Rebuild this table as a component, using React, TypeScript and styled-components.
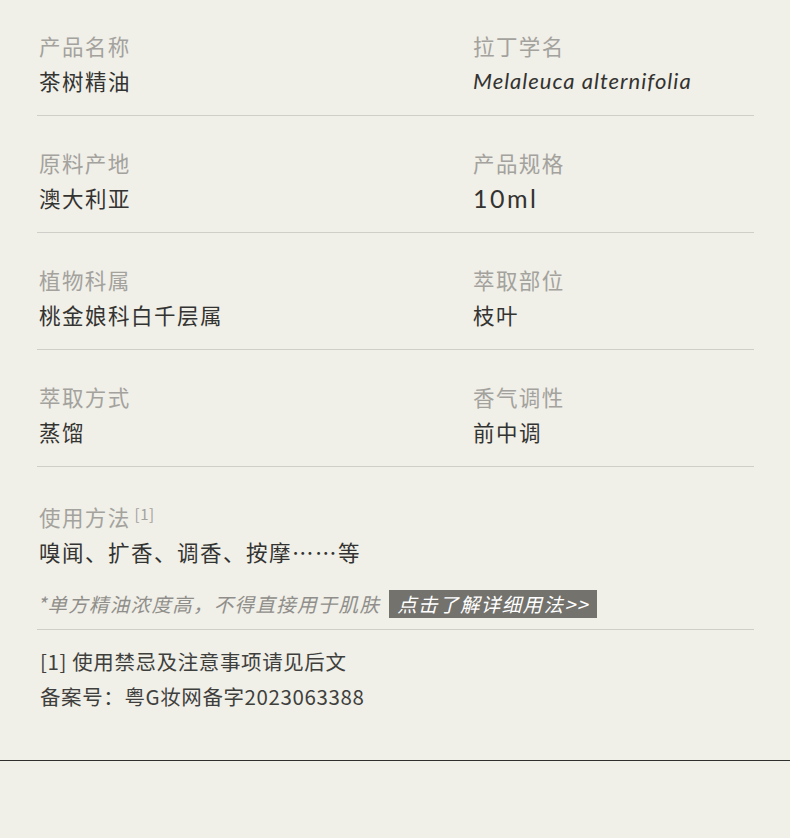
import React from 'react';
import styled, { createGlobalStyle } from 'styled-components';

const GlobalStyle = createGlobalStyle`
  html, body {
    margin: 0;
    padding: 0;
    background: #f0efe8;
  }
  body {
    font-family: "Noto Sans CJK SC", "Noto Sans", sans-serif;
  }
`;

const Page = styled.div`
  width: 790px;
  height: 838px;
  background: #f0efe8;
  display: flex;
  flex-direction: column;
`;

const Content = styled.div`
  padding: 25px 36px 0 37px;
  height: 760px;
  box-sizing: border-box;
`;

const Row = styled.div<{ first?: boolean }>`
  display: grid;
  grid-template-columns: 434px 1fr;
  padding: ${p => (p.first ? '6px' : '32px')} 0 19px 2px;
  border-bottom: 1px solid #cfcec8;
`;

const Field = styled.div`
  display: flex;
  flex-direction: column;
`;

const Label = styled.div`
  font-size: 21.5px;
  line-height: 30px;
  color: #a3a29d;
  letter-spacing: 1.4px;
  margin-bottom: 5px;
`;

const Value = styled.div<{ latin?: boolean; italic?: boolean; wide?: boolean }>`
  font-family: ${p => (p.latin ? 'Lato, "Noto Sans", sans-serif' : '"Noto Sans CJK SC", sans-serif')};
  font-style: ${p => (p.italic ? 'italic' : 'normal')};
  font-size: ${p => (p.wide ? '25px' : p.latin ? '22px' : '21.5px')};
  line-height: 30px;
  color: #333331;
  letter-spacing: ${p => (p.wide ? '2.5px' : p.latin ? '1px' : '1.5px')};
`;

const Usage = styled.div`
  padding: 32px 0 11px 2px;
  border-bottom: 1px solid #cfcec8;
`;

const Sup = styled.sup`
  font-size: 15px;
  margin-left: 4px;
  vertical-align: 6px;
  letter-spacing: 0.5px;
`;

const Note = styled.div`
  margin-top: 22px;
  display: flex;
  align-items: center;
  font-size: 19.5px;
  font-style: italic;
  color: #8f8e8a;
  letter-spacing: 1.3px;
  margin-left: -2px;
`;

const DetailButton = styled.span`
  display: inline-block;
  margin-left: 9px;
  background: #73726d;
  color: #ffffff;
  padding: 0 8px;
  height: 28px;
  line-height: 28px;
  font-size: 19.5px;
  font-style: italic;
  letter-spacing: 1.4px;
  cursor: pointer;
`;

const Footnotes = styled.div`
  padding: 14px 0 0 3px;
`;

const FootLine = styled.div`
  font-size: 20.5px;
  line-height: 35px;
  color: #3f3f3d;
  letter-spacing: 0.6px;
`;

const BottomRule = styled.div`
  height: 1px;
  background: #2f2f2d;
`;

type FieldData = { label: string; value: string; latin?: boolean; italic?: boolean; wide?: boolean };

const rows: FieldData[][] = [
  [
    { label: '产品名称', value: '茶树精油' },
    { label: '拉丁学名', value: 'Melaleuca alternifolia', latin: true, italic: true },
  ],
  [
    { label: '原料产地', value: '澳大利亚' },
    { label: '产品规格', value: '10ml', latin: true, wide: true },
  ],
  [
    { label: '植物科属', value: '桃金娘科白千层属' },
    { label: '萃取部位', value: '枝叶' },
  ],
  [
    { label: '萃取方式', value: '蒸馏' },
    { label: '香气调性', value: '前中调' },
  ],
];

const App: React.FC = () => {
  return (
    <Page>
      <GlobalStyle />
      <Content>
        {rows.map((row, i) => (
          <Row key={i} first={i === 0}>
            {row.map(f => (
              <Field key={f.label}>
                <Label>{f.label}</Label>
                <Value latin={f.latin} italic={f.italic} wide={f.wide}>{f.value}</Value>
              </Field>
            ))}
          </Row>
        ))}
        <Usage>
          <Label>
            使用方法<Sup>[1]</Sup>
          </Label>
          <Value>嗅闻、扩香、调香、按摩……等</Value>
          <Note>
            *单方精油浓度高，不得直接用于肌肤
            <DetailButton>点击了解详细用法&gt;&gt;</DetailButton>
          </Note>
        </Usage>
        <Footnotes>
          <FootLine>[1] 使用禁忌及注意事项请见后文</FootLine>
          <FootLine>备案号：粤G妆网备字2023063388</FootLine>
        </Footnotes>
      </Content>
      <BottomRule />
    </Page>
  );
};

export default App;
